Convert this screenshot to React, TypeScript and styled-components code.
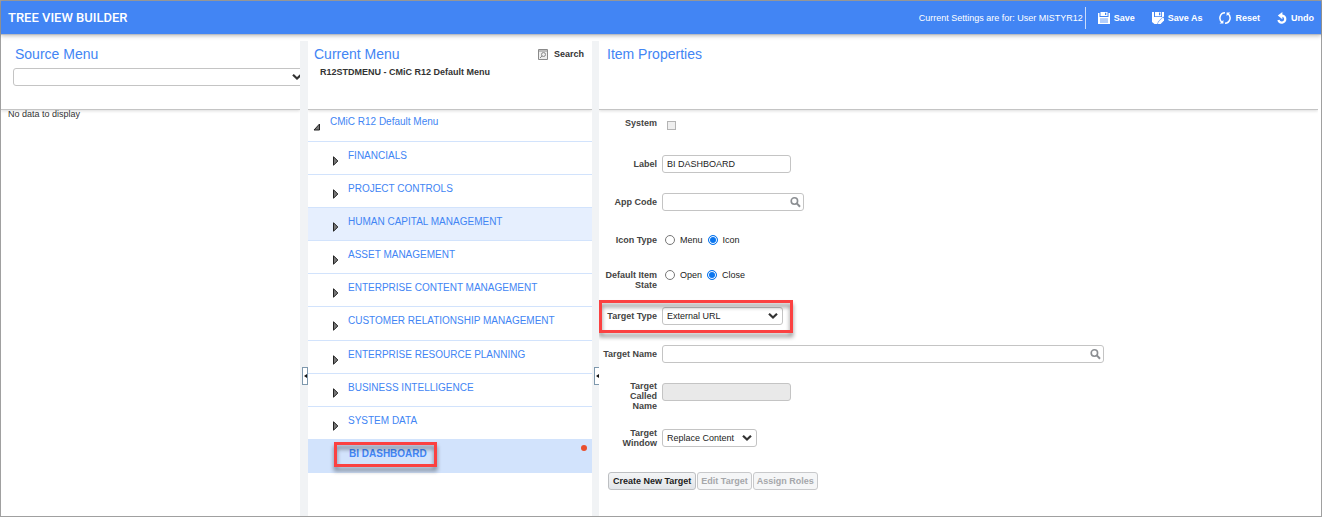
import React from "react";
import styled, { createGlobalStyle, css } from "styled-components";

const blue = "#4285f4";
const line = "#c4c4c4";

const GlobalStyle = createGlobalStyle`
  *, *::before, *::after { box-sizing: border-box; }
  body {
    margin: 0;
    background: #fff;
    color: #333;
    font-family: "Liberation Sans", Arial, sans-serif;
    font-size: 9px;
    line-height: 10px;
  }
  button, input, select { font: inherit; color: inherit; margin: 0; }
`;

const Page = styled.div`
  display: flex;
  flex-direction: column;
  min-height: 100vh;
  border: 1px solid #a0a0a0;
`;

const TopBar = styled.header`
  display: flex;
  align-items: center;
  height: 34px;
  padding: 0 7px;
  background: ${blue};
  border-bottom: 1px solid #b9bcc2;
  box-shadow: 0 1px 4px rgba(0, 0, 0, 0.25);
  color: #fff;
`;

const AppTitle = styled.h1`
  flex: 1;
  margin: 0;
  font-family: Roboto, "Liberation Sans", sans-serif;
  font-size: 13px;
  line-height: 14px;
  font-weight: 500;
`;

const SettingsNote = styled.span`
  padding-right: 2px;
  line-height: 22px;
  border-right: 1px solid #c9dbfb;
`;

const Actions = styled.div`
  display: flex;
  gap: 17px;
  padding-left: 12px;
`;

const Action = styled.button`
  display: flex;
  align-items: center;
  gap: 4px;
  padding: 0;
  border: 0;
  background: none;
  color: #fff;
  font-weight: 700;
  white-space: nowrap;
`;

const Workspace = styled.main`
  display: flex;
  flex: 1;
  padding: 6px 3px 0 0;
`;

const Panel = styled.section<{ $width?: number }>`
  min-width: 0;
  overflow: hidden;
  ${(p) => (p.$width ? css`flex: 0 0 ${p.$width}px;` : css`flex: 1;`)}
`;

const PanelHead = styled.div<{ $inset: number }>`
  height: 69px;
  padding: 5px 8px 0 ${(p) => p.$inset}px;
  border-bottom: 1px solid ${line};
  box-shadow: 0 1px 3px rgba(0, 0, 0, 0.14);
`;

const HeadRow = styled.div`
  display: flex;
  align-items: center;
  justify-content: space-between;
`;

const PanelTitle = styled.h2`
  margin: 0;
  color: ${blue};
  font-size: 14px;
  line-height: 16px;
  font-weight: 400;
`;

const SearchButton = styled(Action)`
  gap: 6px;
  color: #333;
`;

const MenuName = styled.p`
  margin: 5px 0 0 6px;
  font-weight: 700;
`;

const Empty = styled.p`
  margin: 0;
  padding: 0 7px;
  line-height: 8px;
`;

const Splitter = styled.div<{ $width: number }>`
  display: flex;
  flex: 0 0 ${(p) => p.$width}px;
  align-items: flex-start;
  padding: 326px 0 0 2px;
  overflow: hidden;
  background: #f1f3f5;
`;

const Collapse = styled.button`
  display: flex;
  flex: 0 0 6px;
  align-items: center;
  justify-content: center;
  height: 18px;
  padding: 0;
  border: 1px solid #7e98ad;
  background: #fff;
`;

const Tree = styled.ul`
  display: grid;
  grid-template-rows: 32px repeat(10, minmax(33px, 1fr));
  min-height: 363px;
  margin: 0;
  padding: 0;
  list-style: none;
`;

const TreeRow = styled.li<{ $level: number; $tone?: "hover" | "selected" }>`
  position: relative;
  display: flex;
  gap: 9px;
  padding: ${(p) => (p.$level ? 8 : 6)}px 5px 0 ${(p) => 5 + p.$level * 18}px;
  border-bottom: 1px solid #d2e3fc;
  ${(p) => p.$tone === "hover" && css`background: #e6effe;`}
  ${(p) => p.$tone === "selected" && css`background: #d2e3fc; font-weight: 700;`}
`;

const Toggle = styled.button`
  display: flex;
  flex: 0 0 8px;
  height: 10px;
  margin-top: 6px;
  padding: 0;
  border: 0;
  background: none;
`;

const NodeLink = styled.a`
  flex: 1;
  color: ${blue};
  font-size: 10px;
  line-height: 12px;
  text-decoration: none;
`;

const Dot = styled.span`
  position: absolute;
  top: 5px;
  right: 5px;
  width: 6px;
  height: 6px;
  border-radius: 50%;
  background: #ea4f2d;
`;

const Highlight = styled.span<{ $top: number; $left: number; $width: number; $height: number }>`
  position: absolute;
  top: ${(p) => p.$top}px;
  left: ${(p) => p.$left}px;
  width: ${(p) => p.$width}px;
  height: ${(p) => p.$height}px;
  border: 3px solid #fb4141;
  filter: drop-shadow(0 4px 2px rgba(0, 0, 0, 0.45));
  pointer-events: none;
`;

const Form = styled.form`
  padding-top: 7px;
`;

const FormRow = styled.div<{ $height?: number }>`
  position: relative;
  display: flex;
  align-items: flex-start;
  gap: 5px;
  min-height: ${(p) => p.$height ?? 38}px;
`;

const Label = styled.label<{ $drop?: number; $narrow?: boolean }>`
  flex: 0 0 58px;
  padding-top: ${(p) => p.$drop ?? 4}px;
  padding-left: ${(p) => (p.$narrow ? 20 : 3)}px;
  color: #444;
  font-weight: 700;
  text-align: right;
`;

const Field = styled.div<{ $width: number; $drop?: number }>`
  position: relative;
  display: flex;
  flex: 0 1 ${(p) => p.$width}px;
  margin-top: ${(p) => p.$drop ?? 0}px;
`;

const control = css`
  width: 100%;
  height: 18px;
  padding: 0 4px;
  border: 1px solid ${line};
  border-radius: 3px;
  background: #fff;
  color: #222;
`;

const TextInput = styled.input`
  ${control}
  &:disabled { background: #e9e9e9; }
`;

const Select = styled.select`
  ${control}
  appearance: none;
`;

const FieldIcon = styled.span<{ $right: number }>`
  position: absolute;
  top: 0;
  right: ${(p) => p.$right}px;
  display: flex;
  align-items: center;
  height: 100%;
  pointer-events: none;
`;

const SourceField = styled.div`
  position: relative;
  display: flex;
  width: 290px;
  margin: 6px 0 0 -2px;
`;

const Checkbox = styled.input`
  appearance: none;
  width: 9px;
  height: 9px;
  margin: 4px 0 0 5px;
  border: 1px solid #b4b4b4;
  background: #efefef;
`;

const Choices = styled.div<{ $drop: number }>`
  display: flex;
  gap: 5px;
  padding: ${(p) => p.$drop}px 3px 0;
`;

const Choice = styled.label`
  display: flex;
  align-items: center;
  gap: 5px;
  color: #222;
`;

const Radio = styled.input`
  appearance: none;
  width: 10px;
  height: 10px;
  border: 1px solid #777;
  border-radius: 50%;
  background: #fff;
  &:checked {
    border-color: #0b76ef;
    background: #0b76ef;
    box-shadow: inset 0 0 0 1px #fff;
  }
`;

const Buttons = styled.div`
  display: flex;
  gap: 1px;
  padding-left: 9px;
`;

const PushButton = styled.button`
  height: 18px;
  padding: 0 4px;
  border: 1px solid #bdbfc2;
  border-radius: 3px;
  background: linear-gradient(#f4f5f6, #e2e5e9);
  color: #222;
  font-weight: 700;
  white-space: nowrap;
  &:disabled { padding: 0 3px; border-color: #c8c9cb; background: #f5f6f7; color: #a5a7aa; }
`;

const Chevron = () => (
  <svg width="10" height="8" viewBox="0 0 10 8" fill="none" stroke="#333" strokeWidth="2.2" aria-hidden="true">
    <path d="M1 1.8 5 5.6 9 1.8" />
  </svg>
);

const Lens = () => (
  <svg width="11" height="11" viewBox="0 0 11 11" fill="none" stroke="#8b8e92" aria-hidden="true">
    <circle cx="4.4" cy="4" r="3.2" strokeWidth="1.6" />
    <path d="M6.8 6.4 10 9.8" strokeWidth="2" />
  </svg>
);

const SaveIcon = () => (
  <svg width="12" height="12" viewBox="0 0 12 12" aria-hidden="true">
    <path fill="#fff" fillRule="evenodd" d="M0 1H1.5V5H10.5V1H12V12H0ZM2 6.5V11H10V6.5Z" />
    <path fill="#fff" fillRule="evenodd" d="M2.5 0H9.5V4H2.5ZM7 .8V3H8.3V.8Z" />
    <path fill="#fff" fillOpacity=".6" d="M2 6.500H10V11H2Z" />
  </svg>
);

const SaveAsIcon = () => (
  <svg width="12" height="12" viewBox="0 0 12 12" aria-hidden="true">
    <path fill="#fff" fillRule="evenodd" d="M0 0H12V4.500L5 12H2.500L0 10ZM2 0V5H10V0Z" />
    <path fill="#fff" fillRule="evenodd" d="M3 0H9.200V4.200H3ZM7 .6V3.200H8.300V.6Z" />
    <path fill="#fff" d="M5.800 12 6.800 9.800 10.800 5.600 12 6.600V8.400L8.600 12Z" />
    <path stroke="#4285f4" strokeWidth=".6" d="M5.600 10.400 11 4.800" />
  </svg>
);

const ResetIcon = () => (
  <svg width="12" height="12" viewBox="0 0 12 12" fill="none" stroke="#fff" strokeWidth="1.5" aria-hidden="true">
    <path d="M3.200 10.300A5.200 5.200 0 0 1 6 .8M8.800 1.700A5.200 5.200 0 0 1 6 11.200" />
    <path fill="#fff" stroke="none" d="M.6 11.600H4.400V8ZM11.400 .4H7.600V4Z" />
  </svg>
);

const UndoIcon = () => (
  <svg width="10" height="12" viewBox="0 0 10 12" fill="none" stroke="#fff" strokeWidth="2.2" aria-hidden="true">
    <path d="M4.500 3.600H5.200A3.500 3.500 0 1 1 1.400 8" />
    <path fill="#fff" stroke="none" d="M5.400 0V7.200L.8 3.600Z" />
  </svg>
);

const FindIcon = () => (
  <svg width="10" height="11" viewBox="0 0 10 11" fill="none" stroke="#8a8a8a" aria-hidden="true">
    <path fill="#eee" d="M.5 .5H9.5V10.5H.5ZM.5 2H9.5" />
    <circle cx="5.5" cy="5.5" r="2" />
    <path d="M4 7 2 9" />
  </svg>
);

const ClosedArrow = () => (
  <svg width="8" height="10" viewBox="0 0 8 10" aria-hidden="true">
    <path d="M2.500 .8 6.900 5 2.500 9.200Z" fill="#777" stroke="#222" />
  </svg>
);

const OpenArrow = () => (
  <svg width="8" height="10" viewBox="0 0 8 10" aria-hidden="true">
    <path d="M6.500 2V8H1Z" fill="#777" stroke="#222" />
  </svg>
);

const HandleArrow = () => (
  <svg width="3" height="4" viewBox="0 0 3 4" aria-hidden="true">
    <path d="M3 0V4L0 2Z" fill="#111" />
  </svg>
);

const modules = [
  "FINANCIALS",
  "PROJECT CONTROLS",
  "HUMAN CAPITAL MANAGEMENT",
  "ASSET MANAGEMENT",
  "ENTERPRISE CONTENT MANAGEMENT",
  "CUSTOMER RELATIONSHIP MANAGEMENT",
  "ENTERPRISE RESOURCE PLANNING",
  "BUSINESS INTELLIGENCE",
  "SYSTEM DATA",
];

const Divider = ({ width }: { width: number }) => (
  <Splitter $width={width}>
    <Collapse type="button" aria-label="Collapse pane">
      <HandleArrow />
    </Collapse>
  </Splitter>
);

export default function App() {
  return (
    <>
      <GlobalStyle />
      <Page>
        <TopBar>
          <AppTitle>TREE VIEW BUILDER</AppTitle>
          <SettingsNote>Current Settings are for: User MISTYR12</SettingsNote>
          <Actions>
            <Action type="button"><SaveIcon />Save</Action>
            <Action type="button"><SaveAsIcon />Save As</Action>
            <Action type="button"><ResetIcon />Reset</Action>
            <Action type="button"><UndoIcon />Undo</Action>
          </Actions>
        </TopBar>
        <Workspace>
          <Panel $width={299}>
            <PanelHead $inset={14}>
              <PanelTitle>Source Menu</PanelTitle>
              <SourceField>
                <Select aria-label="Source menu" defaultValue="">
                  <option value="" />
                </Select>
                <FieldIcon $right={1}><Chevron /></FieldIcon>
              </SourceField>
            </PanelHead>
            <Empty>No data to display</Empty>
          </Panel>
          <Divider width={8} />
          <Panel $width={284}>
            <PanelHead $inset={6}>
              <HeadRow>
                <PanelTitle>Current Menu</PanelTitle>
                <SearchButton type="button"><FindIcon />Search</SearchButton>
              </HeadRow>
              <MenuName>R12STDMENU - CMiC R12 Default Menu</MenuName>
            </PanelHead>
            <Tree>
              <TreeRow $level={0}>
                <Toggle type="button" aria-label="Collapse"><OpenArrow /></Toggle>
                <NodeLink href="#root-menu">CMiC R12 Default Menu</NodeLink>
              </TreeRow>
              {modules.map((name) => (
                <TreeRow key={name} $level={1} $tone={name.startsWith("HUMAN") ? "hover" : undefined}>
                  <Toggle type="button" aria-label="Expand"><ClosedArrow /></Toggle>
                  <NodeLink href="#module">{name}</NodeLink>
                </TreeRow>
              ))}
              <TreeRow $level={2} $tone="selected">
                <NodeLink href="#dashboard">BI DASHBOARD</NodeLink>
                <Dot />
                <Highlight $top={2} $left={26} $width={103} $height={25} />
              </TreeRow>
            </Tree>
          </Panel>
          <Divider width={7} />
          <Panel>
            <PanelHead $inset={8}>
              <PanelTitle>Item Properties</PanelTitle>
            </PanelHead>
            <Form>
              <FormRow>
                <Label htmlFor="system" $drop={1}>System</Label>
                <Checkbox id="system" type="checkbox" disabled />
              </FormRow>
              <FormRow>
                <Label htmlFor="label">Label</Label>
                <Field $width={129}><TextInput id="label" defaultValue="BI DASHBOARD" /></Field>
              </FormRow>
              <FormRow>
                <Label htmlFor="app-code">App Code</Label>
                <Field $width={142}>
                  <TextInput id="app-code" />
                  <FieldIcon $right={3}><Lens /></FieldIcon>
                </Field>
              </FormRow>
              <FormRow>
                <Label as="span">Icon Type</Label>
                <Choices $drop={4} role="radiogroup" aria-label="Icon Type">
                  <Choice><Radio type="radio" name="icon-type" />Menu</Choice>
                  <Choice><Radio type="radio" name="icon-type" defaultChecked />Icon</Choice>
                </Choices>
              </FormRow>
              <FormRow>
                <Label as="span" $drop={1}>Default Item State</Label>
                <Choices $drop={1} role="radiogroup" aria-label="Default Item State">
                  <Choice><Radio type="radio" name="state" />Open</Choice>
                  <Choice><Radio type="radio" name="state" defaultChecked />Close</Choice>
                </Choices>
              </FormRow>
              <FormRow>
                <Label htmlFor="target-type">Target Type</Label>
                <Field $width={121}>
                  <Select id="target-type"><option>External URL</option></Select>
                  <FieldIcon $right={5}><Chevron /></FieldIcon>
                </Field>
                <Highlight $top={-7} $left={0} $width={194} $height={33} />
              </FormRow>
              <FormRow $height={36}>
                <Label htmlFor="target-name">Target Name</Label>
                <Field $width={442}>
                  <TextInput id="target-name" />
                  <FieldIcon $right={3}><Lens /></FieldIcon>
                </Field>
              </FormRow>
              <FormRow $height={46}>
                <Label htmlFor="called-name" $drop={0} $narrow>Target Called Name</Label>
                <Field $width={129} $drop={2}><TextInput id="called-name" disabled /></Field>
              </FormRow>
              <FormRow $height={45}>
                <Label htmlFor="target-window" $drop={1} $narrow>Target Window</Label>
                <Field $width={95} $drop={2}>
                  <Select id="target-window"><option>Replace Content</option></Select>
                  <FieldIcon $right={5}><Chevron /></FieldIcon>
                </Field>
              </FormRow>
              <Buttons>
                <PushButton type="button">Create New Target</PushButton>
                <PushButton type="button" disabled>Edit Target</PushButton>
                <PushButton type="button" disabled>Assign Roles</PushButton>
              </Buttons>
            </Form>
          </Panel>
        </Workspace>
      </Page>
    </>
  );
}
